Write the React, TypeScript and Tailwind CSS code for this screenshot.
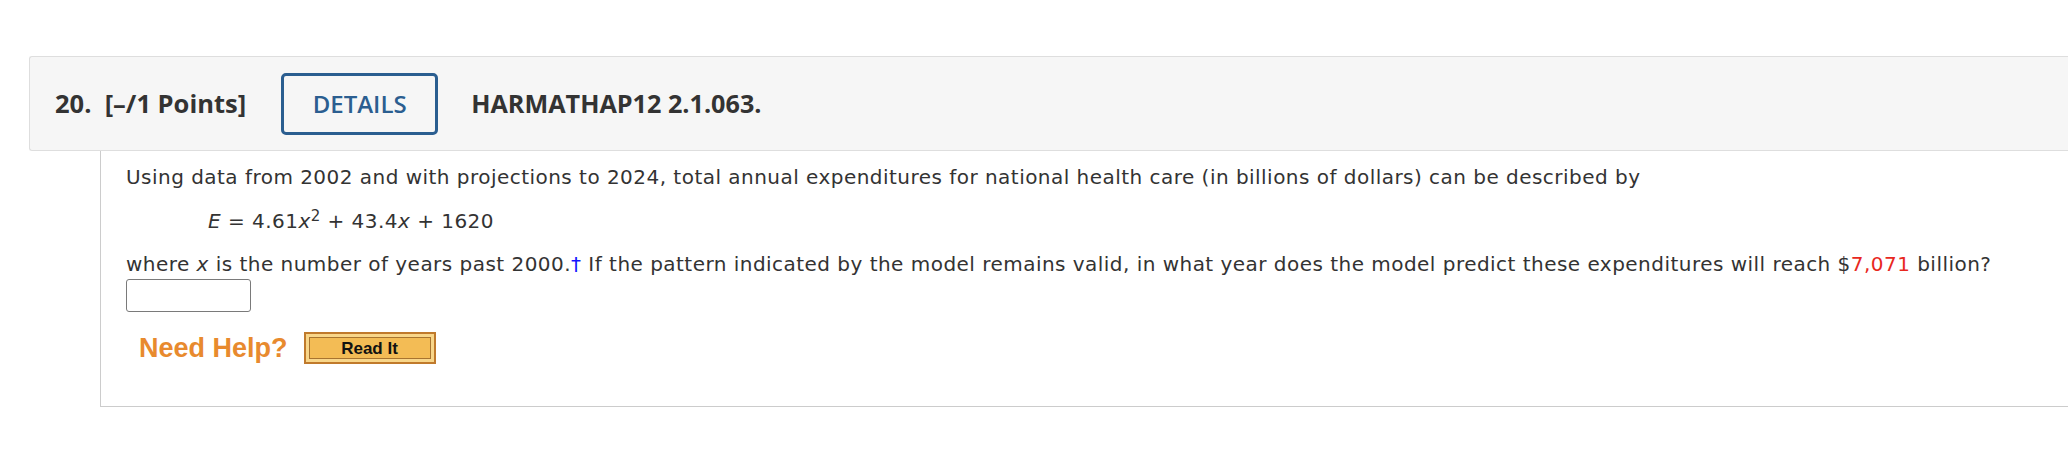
export default function App() {
  return (
    <div className="w-[2068px] h-[468px] bg-white overflow-hidden">
      <div className="pt-[56px] pl-[29px]">
        {/* Header */}
        <div className="h-[95px] border border-r-0 border-[#dedede] bg-[#f6f6f6] rounded-l-[3px] flex items-center pl-[25px] text-[#333] [font-family:'Open_Sans',sans-serif]">
          <span className="text-[25.5px] font-bold whitespace-pre">20.  [–/1 Points]</span>
          <div className="ml-[35px] w-[157px] h-[62px] border-[3px] border-[#2b5e90] rounded-[5px] flex items-center justify-center text-[24px] font-semibold text-[#2b5e90]">
            DETAILS
          </div>
          <span className="ml-[33px] text-[25.2px] font-bold">HARMATHAP12 2.1.063.</span>
        </div>
        {/* Body */}
        <div className="ml-[71px] h-[256px] border-l border-b border-[#cccccc] pl-[25px] pt-[14px] text-[#333] text-[20px] tracking-[0.47px] leading-[24px] [font-family:'DejaVu_Sans',Verdana,sans-serif]">
          <p>
            Using data from 2002 and with projections to 2024, total annual expenditures for national health care (in billions of dollars) can be described by
          </p>
          <p className="mt-[20px] ml-[82px]">
            <i>E</i> = 4.61<i>x</i>
            <sup>2</sup> + 43.4<i>x</i> + 1620
          </p>
          <p className="mt-[19px]">
            where <i>x</i> is the number of years past 2000.<span className="text-[#1414ff]">†</span> If the pattern indicated by the model remains valid, in what year does the model predict these expenditures will reach $<span className="text-[#e8281e]">7,071</span> billion?
          </p>
          <div className="mt-[3px] w-[125px] h-[33px] border border-[#7a7a7a] rounded-[3px] bg-white" />
          <div className="mt-[20px] flex items-center h-[32px] tracking-normal">
            <span className="ml-[13px] text-[27px] font-bold text-[#e88a2e] [font-family:'Liberation_Sans',Arial,sans-serif] leading-none">
              Need Help?
            </span>
            <div className="ml-[16px] w-[132px] h-[32px] border-2 border-[#c07a2c] bg-[#f8d68a] p-[3px]">
              <div className="h-full border border-[#a8742f] bg-[#f3bc55] flex items-center justify-center text-[17px] font-bold text-[#111] [font-family:'Liberation_Sans',Arial,sans-serif] leading-none">
                Read It
              </div>
            </div>
          </div>
        </div>
      </div>
    </div>
  );
}
